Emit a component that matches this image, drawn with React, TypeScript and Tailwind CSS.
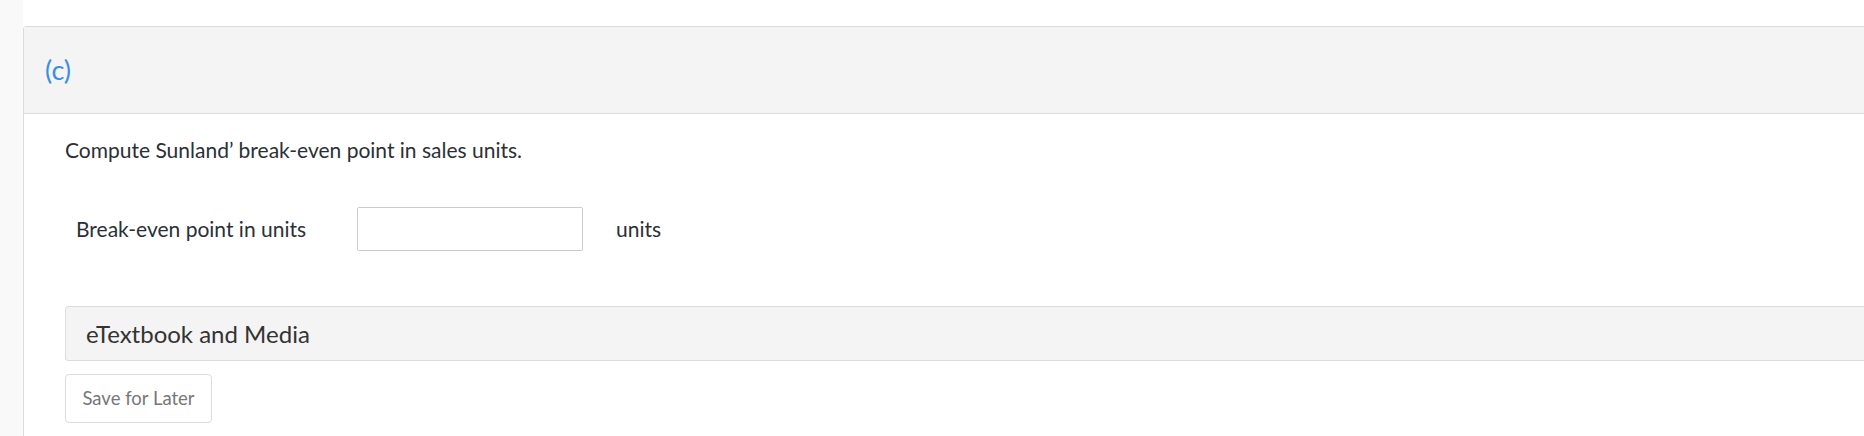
import React from "react";

export default function App() {
  return (
    <div className="flex h-[436px] w-full overflow-hidden bg-white" style={{ fontFamily: "Lato, 'Open Sans', sans-serif" }}>
      <div className="w-[23px] shrink-0 bg-[#f9f9f9]" />
      <div className="flex-1 overflow-hidden pt-[26px]">
        <div className="min-h-[500px] w-[calc(100%+10px)] rounded-tl-[3px] border border-[#dcdcdc]">
          <div className="flex h-[87px] items-center border-b border-[#dcdcdc] bg-[#f4f4f4] pl-[21px]">
            <span className="text-[27px] leading-[30px] text-[#3a8ee0]">(c)</span>
          </div>
          <div className="pl-[41px] pt-[21px]">
            <p className="text-[21px] leading-[30px] text-[#2a3036]">Compute Sunland’ break-even point in sales units.</p>
            <div className="mt-[42px] flex items-center pl-[11px]">
              <span className="w-[281px] text-[21px] leading-[30px] text-[#2a3036]">Break-even point in units</span>
              <input type="text" className="h-[44px] w-[226px] rounded-[2px] border border-[#cccccc] bg-white outline-none" />
              <span className="ml-[33px] text-[21px] leading-[30px] text-[#2a3036]">units</span>
            </div>
            <div className="mt-[55px] flex h-[55px] items-center rounded-[3px] border border-[#dcdcdc] bg-[#f4f4f4] pl-[20px]">
              <span className="text-[24px] leading-[30px] text-[#333333]">eTextbook and Media</span>
            </div>
            <button className="mt-[13px] h-[49px] w-[147px] rounded-[4px] border border-[#dcdcdc] bg-white text-[18.5px] text-[#777777]">
              Save for Later
            </button>
          </div>
        </div>
      </div>
    </div>
  );
}
